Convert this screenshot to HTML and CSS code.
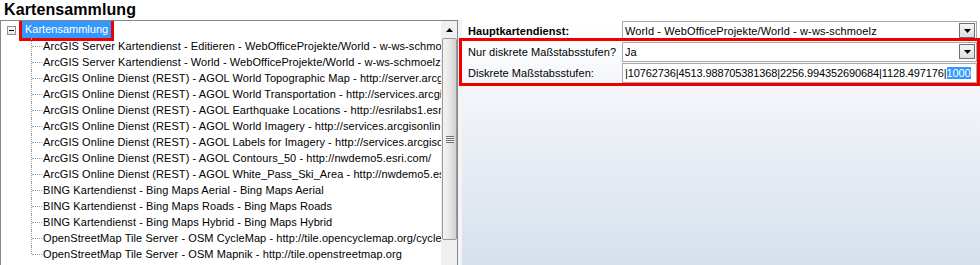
FILE: index.html
```html
<!DOCTYPE html>
<html lang="de">
<head>
<meta charset="utf-8">
<title>Kartensammlung</title>
<link rel="stylesheet" href="styles.css">
</head>
<body>
<div class="app">
  <h1 class="title">Kartensammlung</h1>
  <div class="main">
    <div class="tree-panel">
      <div class="tree">
        <div class="root-row">
          <span class="expander"></span>
          <span class="node selected">Kartensammlung</span>
        </div>
        <ul class="children">
          <li>ArcGIS Server Kartendienst - Editieren - WebOfficeProjekte/World - w-ws-schmoelz</li>
          <li>ArcGIS Server Kartendienst - World - WebOfficeProjekte/World - w-ws-schmoelz</li>
          <li>ArcGIS Online Dienst (REST) - AGOL World Topographic Map - http://server.arcgisonline.com</li>
          <li>ArcGIS Online Dienst (REST) - AGOL World Transportation - http://services.arcgisonline.com</li>
          <li>ArcGIS Online Dienst (REST) - AGOL Earthquake Locations - http://esrilabs1.esri.com</li>
          <li>ArcGIS Online Dienst (REST) - AGOL World Imagery - http://services.arcgisonline.com</li>
          <li>ArcGIS Online Dienst (REST) - AGOL Labels for Imagery - http://services.arcgisonline.com</li>
          <li>ArcGIS Online Dienst (REST) - AGOL Contours_50 - http://nwdemo5.esri.com/</li>
          <li>ArcGIS Online Dienst (REST) - AGOL White_Pass_Ski_Area - http://nwdemo5.esri.com/</li>
          <li>BING Kartendienst - Bing Maps Aerial - Bing Maps Aerial</li>
          <li>BING Kartendienst - Bing Maps Roads - Bing Maps Roads</li>
          <li>BING Kartendienst - Bing Maps Hybrid - Bing Maps Hybrid</li>
          <li>OpenStreetMap Tile Server - OSM CycleMap - http://tile.opencyclemap.org/cycle</li>
          <li>OpenStreetMap Tile Server - OSM Mapnik - http://tile.openstreetmap.org</li>
        </ul>
      </div>
      <div class="vscroll">
        <div class="sb-btn">
          <svg width="7" height="4" viewBox="0 0 7 4"><path d="M0 4 L3.5 0 L7 4 Z" fill="#000"/></svg>
        </div>
        <div class="sb-thumb">
          <span class="grip"></span>
        </div>
        <div class="sb-track"></div>
      </div>
    </div>
    <div class="props">
      <div class="prop-row">
        <div class="prop-label bold">Hauptkartendienst:</div>
        <div class="prop-value combo">
          <span class="combo-text">World - WebOfficeProjekte/World - w-ws-schmoelz</span>
          <span class="drop-btn"><svg width="7" height="4" viewBox="0 0 7 4"><path d="M0 0 L7 0 L3.5 4 Z" fill="#000"/></svg></span>
        </div>
      </div>
      <div class="marked">
        <div class="prop-row">
          <div class="prop-label">Nur diskrete Maßstabsstufen?</div>
          <div class="prop-value combo">
            <span class="combo-text">Ja</span>
            <span class="drop-btn"><svg width="7" height="4" viewBox="0 0 7 4"><path d="M0 0 L7 0 L3.5 4 Z" fill="#000"/></svg></span>
          </div>
        </div>
        <div class="prop-row">
          <div class="prop-label">Diskrete Maßstabsstufen:</div>
          <div class="prop-value textbox">
            <span class="tb-text">|10762736|4513.988705381368|2256.994352690684|1128.497176|<span class="sel">1000</span></span>
          </div>
        </div>
      </div>
    </div>
  </div>
</div>
</body>
</html>
```
FILE: styles.css
```css
* { box-sizing: border-box; }
html, body { margin: 0; padding: 0; }
body {
  width: 980px;
  height: 265px;
  overflow: hidden;
  background: #fff;
  font-family: "Liberation Sans", Arial, sans-serif;
  font-size: 11px;
  color: #000;
}
.app { display: flex; flex-direction: column; height: 265px; }
.title {
  margin: 0;
  height: 20px;
  line-height: 20px;
  font-size: 16px;
  font-weight: bold;
  padding-left: 4px;
  letter-spacing: 0.1px;
}
.main {
  display: flex;
  gap: 4px;
  height: 245px;
  background: #f4f4f4;
}

/* tree */
.tree-panel {
  width: 458px;
  display: flex;
  border: 1px solid #828790;
  border-bottom: none;
  background: #fff;
}
.tree {
  flex: 1;
  min-width: 0;
  padding-top: 1px;
  overflow: hidden;
}
.root-row {
  height: 16px;
  display: flex;
  align-items: flex-end;
}
.expander {
  position: relative;
  align-self: center;
  width: 9px;
  height: 9px;
  margin-left: 6px;
  border: 1px solid #919191;
  background: linear-gradient(#ffffff, #e4e4e4);
}
.expander::after {
  content: "";
  position: absolute;
  left: 1px;
  top: 3px;
  width: 5px;
  height: 1px;
  background: #000;
}
.node {
  height: 16px;
  line-height: 16px;
  white-space: nowrap;
}
.selected {
  position: relative;
  margin-left: 6px;
  height: 18px;
  line-height: 18px;
  padding: 0 3px 0 3px;
  background: #3399ff;
  color: #fff;
  outline: 3px solid #ee0000;
}
.children {
  margin: 0;
  padding: 0;
  list-style: none;
}
.children li {
  position: relative;
  height: 16px;
  line-height: 16px;
  padding-left: 42px;
  white-space: nowrap;
  letter-spacing: 0.08px;
}
.children li::before {
  content: "";
  position: absolute;
  left: 30px;
  top: 0;
  bottom: 0;
  border-left: 1px dotted #a0a0a0;
}
.children li:last-child::before { bottom: 8px; }
.children li::after {
  content: "";
  position: absolute;
  left: 31px;
  top: 8px;
  width: 10px;
  border-top: 1px dotted #a0a0a0;
}

/* scrollbar */
.vscroll {
  width: 16px;
  display: flex;
  flex-direction: column;
  background: #f0f0f0;
}
.sb-btn {
  height: 17px;
  display: flex;
  align-items: center;
  justify-content: center;
  padding-top: 1px;
}
.sb-thumb {
  height: 202px;
  margin-left: 1px;
  border: 1px solid #9a9a9a;
  border-radius: 2px;
  background: linear-gradient(90deg, #f4f4f4 0%, #e9e9e9 45%, #d2d2d2 100%);
  display: flex;
  align-items: center;
  justify-content: center;
}
.grip {
  width: 8px;
  height: 7px;
  background: repeating-linear-gradient(180deg, #6e6e6e 0 1px, #f4f4f4 1px 2px);
}
.sb-track { flex: 1; }

/* properties */
.props {
  flex: 1;
  background: linear-gradient(180deg, #ffffff 0%, #f4f6fa 27%, #d6e0ec 100%);
  padding-right: 3px;
}
.prop-row {
  display: grid;
  grid-template-columns: 160px 1fr;
  height: 21px;
  align-items: center;
}
.prop-label {
  padding-left: 6px;
  white-space: nowrap;
  letter-spacing: 0.05px;
}
.bold { font-weight: bold; }
.prop-value {
  height: 20px;
  border: 1px solid #a9a9a9;
  background: #fff;
  display: flex;
  align-items: center;
  overflow: hidden;
  white-space: nowrap;
}
.combo { padding-left: 2px; }
.combo-text { flex: 1; letter-spacing: 0.12px; }
.drop-btn {
  width: 16px;
  height: 15px;
  margin-right: 1px;
  border: 1px solid #707070;
  background: linear-gradient(#f6f6f6, #dedede);
  display: flex;
  align-items: center;
  justify-content: center;
}
.textbox {
  padding-left: 2px;
}
.tb-text { letter-spacing: -0.12px; }
.sel { background: #3399ff; color: #fff; }
.marked {
  outline: 3px solid #ee0000;
}
```
